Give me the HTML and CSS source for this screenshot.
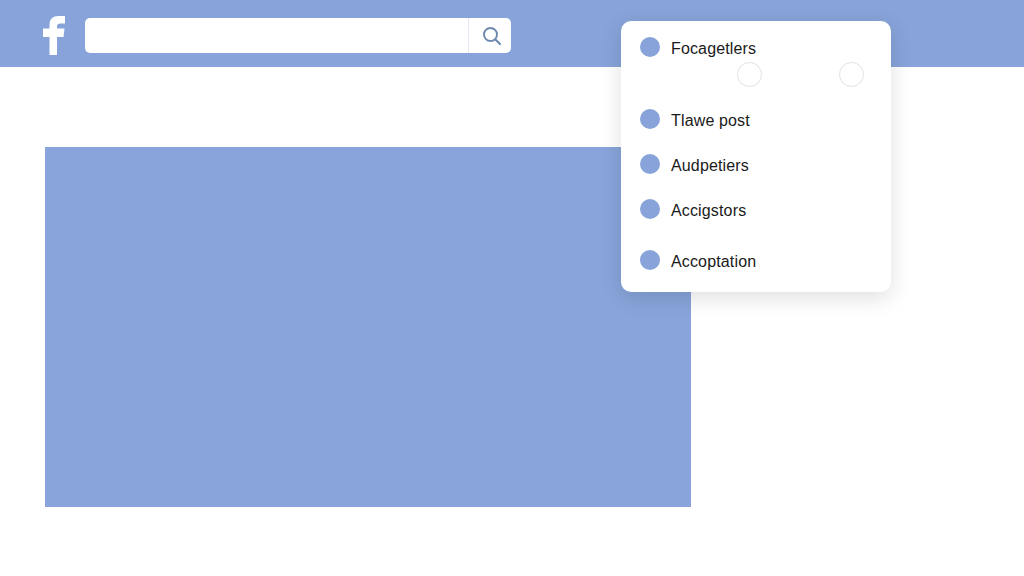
FILE: index.html
```html
<!DOCTYPE html>
<html>
<head>
    <link rel="stylesheet" href="styles.css">
</head>
<body>

    <div class="topbar">
        <svg class="logo" viewBox="0 0 24 40" width="24" height="40">
            <path d="M7.500 39V21H1v-8.500h6.500V9c0-6 3.500-9 9-9H23v7.500h-4.500c-2.500 0-3.500 1-3.500 3v2h7.500l-1 8.500H15v18z" fill="#fff"/>
        </svg>
        <div class="searchbox">
            <div class="searchinput"></div>
            <div class="searchbtn">
                <svg viewBox="0 0 20 20" width="20" height="20">
                    <circle cx="8.500" cy="8.500" r="6.500" fill="none" stroke="#6f8aae" stroke-width="2"/>
                    <path d="M13.500 13.500l4.500 4.500" fill="none" stroke="#6f8aae" stroke-width="2.200" stroke-linecap="round"/>
                </svg>
            </div>
        </div>
    </div>

    <div class="content">
        <div class="banner"></div>
    </div>

    <div class="menu">
        <div class="menuitem">
            <span class="dot"></span>
            <span class="label">Focagetlers</span>
        </div>
        <div class="circles">
            <span class="ring"></span>
            <span class="ring"></span>
        </div>
        <div class="menuitem">
            <span class="dot"></span>
            <span class="label">Tlawe post</span>
        </div>
        <div class="menuitem">
            <span class="dot"></span>
            <span class="label">Audpetiers</span>
        </div>
        <div class="menuitem">
            <span class="dot"></span>
            <span class="label">Accigstors</span>
        </div>
        <div class="menuitem last">
            <span class="dot"></span>
            <span class="label">Accoptation</span>
        </div>
    </div>

</body>
</html>
```

FILE: styles.css
```css
*{
    margin: 0;
    padding: 0;
    box-sizing: border-box;
}
body {
    font-family: "Liberation Sans", Arial, sans-serif;
    background-color: #fff;
    height: 576px;
    overflow: hidden;
}

.topbar{
    display: flex;
    align-items: center;
    height: 67px;
    padding-top: 4px;
    padding-left: 42px;
    background-color: #87a3d9;
}
.logo{
    flex-shrink: 0;
    margin-right: 19px;
}
.searchbox{
    display: flex;
    width: 426px;
    height: 35px;
    background-color: #fff;
    border-radius: 5px;
}
.searchinput{
    flex: 1;
    border-right: 1px solid #e3e8f0;
}
.searchbtn{
    display: flex;
    align-items: center;
    justify-content: center;
    width: 42px;
    padding-left: 4px;
}

.content{
    padding: 80px 0 0 45px;
}
.banner{
    width: 646px;
    height: 360px;
    background-color: #88a4da;
}

.menu{
    position: absolute;
    left: 621px;
    top: 21px;
    width: 270px;
    height: 271px;
    padding: 16px 19px 0;
    background-color: #fff;
    border-radius: 10px;
    box-shadow: 0 6px 22px rgba(0,0,0,0.13);
}
.menuitem{
    display: flex;
    align-items: center;
    height: 20px;
    margin-bottom: 25px;
}
.menuitem.last{
    margin-top: 31px;
    margin-bottom: 0;
}
.dot{
    flex-shrink: 0;
    width: 20px;
    height: 20px;
    margin-right: 11px;
    border-radius: 50%;
    background-color: #87a3d9;
}
.label{
    margin-top: 3px;
    font-size: 16px;
    letter-spacing: 0.15px;
    color: #1a1a1a;
}
.circles{
    display: flex;
    gap: 77px;
    height: 47px;
    margin-top: -20px;
    margin-left: 97px;
}
.ring{
    width: 25px;
    height: 25px;
    border: 1px solid #e2e2e2;
    border-radius: 50%;
}
```
